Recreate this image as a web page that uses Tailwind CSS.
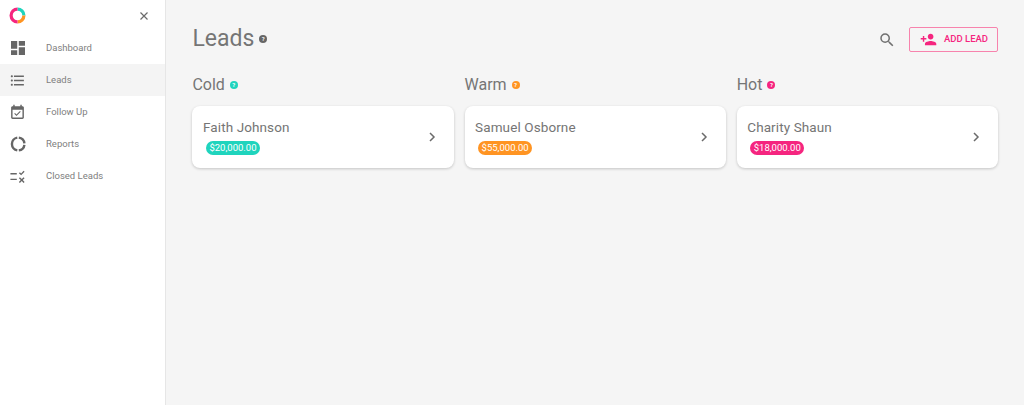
<!doctype html>
<html>
<head>
<meta charset="utf-8">
<script src="https://cdn.jsdelivr.net/npm/@tailwindcss/browser@4"></script>
</head>
<body class="bg-[#f5f5f5] font-['Roboto',sans-serif] text-[#757575]">
<div class="flex h-[405px] w-[1024px] overflow-hidden">
  <aside class="flex h-full w-[166px] shrink-0 flex-col border-r border-[#e6e6e6] bg-white">
    <div class="flex h-[32px] items-center justify-between pb-[1px] pl-[9px] pr-[16px]">
      <svg width="17" height="17" viewBox="0 0 17 17" fill="none" stroke-width="3.2">
        <path d="M8.5 2.1A6.4 6.4 0 0 1 14.9 8.5" stroke="#1fd4bd"/>
        <path d="M14.9 8.5A6.4 6.4 0 0 1 8.5 14.9" stroke="#ff9422"/>
        <path d="M8.5 14.9A6.4 6.4 0 0 1 8.5 2.1" stroke="#f5257f"/>
      </svg>
      <svg width="10" height="10" viewBox="0 0 10 10" stroke="#6b6b6b" stroke-width="1.2"><path d="M1.5 1.5l7 7M8.5 1.5l-7 7"/></svg>
    </div>
    <nav class="flex flex-col text-[9.5px] text-[#808080]">
      <a class="flex h-[32px] items-center"><span class="flex w-[46px] justify-center pr-[11px]"><svg width="14" height="14" viewBox="3 3 18 18" fill="#666"><path d="M3 13h8V3H3v10zm0 8h8v-6H3v6zm10 0h8V11h-8v10zm0-18v6h8V3h-8z"/></svg></span><span class="mt-[1px]">Dashboard</span></a>
      <a class="flex h-[32px] items-center bg-[#f4f4f4]"><span class="flex w-[46px] justify-center pr-[11px]"><svg width="17" height="17" viewBox="0 0 24 24" fill="#666"><path d="M4 10.500c-.83 0-1.500.67-1.500 1.500s.67 1.500 1.500 1.500 1.500-.67 1.500-1.500-.67-1.500-1.500-1.500zm0-6c-.83 0-1.500.67-1.500 1.500S3.170 7.500 4 7.500 5.500 6.830 5.500 6 4.830 4.500 4 4.500zm0 12c-.83 0-1.500.68-1.500 1.500s.68 1.500 1.500 1.500 1.500-.68 1.500-1.500-.67-1.500-1.500-1.500zM7 19h14v-2H7v2zm0-6h14v-2H7v2zm0-8v2h14V5H7z"/></svg></span><span class="mt-[1px]">Leads</span></a>
      <a class="flex h-[32px] items-center"><span class="flex w-[46px] justify-center pr-[11px]"><svg width="17" height="17" viewBox="0 0 24 24" fill="#666"><path d="M16.530 11.060 15.470 10l-4.880 4.880-2.120-2.120-1.060 1.060L10.590 17l5.940-5.940zM19 3h-1V1h-2v2H8V1H6v2H5c-1.110 0-2 .9-2 2v14c0 1.100.89 2 2 2h14c1.100 0 2-.9 2-2V5c0-1.100-.9-2-2-2zm0 16H5V8h14v11z"/></svg></span><span class="mt-[1px]">Follow Up</span></a>
      <a class="flex h-[32px] items-center"><span class="flex w-[46px] justify-center pr-[11px]"><svg width="16" height="16" viewBox="0 0 16 16" fill="none" stroke="#666" stroke-width="2.400"><path d="M7.300 1.600A6.500 6.500 0 0 0 7.300 14.400"/><path d="M8.800 1.600A6.500 6.500 0 0 1 14.400 7.300"/><path d="M14.400 8.800A6.500 6.500 0 0 1 8.800 14.400"/></svg></span><span class="mt-[1px]">Reports</span></a>
      <a class="flex h-[32px] items-center"><span class="flex w-[46px] justify-center pr-[11px]"><svg width="17" height="17" viewBox="0 0 24 24" fill="#666"><path d="M2 7h9v2H2zM2 15h9v2H2zM22 5.400 20.600 4l-3.500 3.600-1.700-1.700L14 7.300l3.100 3.100zM22 14.400 20.600 13 18 15.600 15.400 13 14 14.400l2.600 2.600-2.600 2.600 1.400 1.400 2.600-2.600 2.600 2.600 1.400-1.400-2.600-2.600z"/></svg></span><span class="mt-[1px]">Closed Leads</span></a>
    </nav>
  </aside>
  <main class="flex-1 pl-[26.4px] pr-[26px]">
    <header class="flex h-[76px] items-center justify-between">
      <div class="flex items-center gap-[5px]">
        <h1 class="text-[23px] leading-none">Leads</h1>
        <span class="mt-[1px] flex size-[8px] items-center justify-center rounded-full bg-[#666] text-[6px] font-bold leading-none text-white">?</span>
      </div>
      <div class="mt-[3px] flex items-center gap-[13px]">
        <svg width="18" height="18" viewBox="0 0 24 24" fill="#707070"><path d="M15.500 14h-.79l-.28-.27A6.471 6.471 0 0 0 16 9.500 6.500 6.500 0 1 0 9.500 16c1.610 0 3.090-.59 4.230-1.570l.27.28v.79l5 4.990L20.490 19l-4.990-5zm-6 0C7.010 14 5 11.990 5 9.500S7.010 5 9.500 5 14 7.010 14 9.500 11.990 14 9.500 14z"/></svg>
        <button class="flex h-[25px] w-[89px] items-center gap-[7px] rounded-[2px] border border-solid border-[#f783ad] pl-[10px] text-[9.5px] font-medium text-[#f5257f]">
          <svg width="17" height="17" viewBox="0 0 24 24" fill="#f5257f"><path d="M15 12c2.210 0 4-1.790 4-4s-1.790-4-4-4-4 1.790-4 4 1.790 4 4 4zm-9-2V7H4v3H1v2h3v3h2v-3h3v-2H6zm9 4c-2.670 0-8 1.340-8 4v2h16v-2c0-2.660-5.330-4-8-4z"/></svg>
          <span>ADD LEAD</span>
        </button>
      </div>
    </header>
    <section class="grid grid-cols-3 gap-[10.8px]">
      <div>
        <div class="flex h-[18px] items-center gap-[5px]"><h2 class="text-[16px] leading-none">Cold</h2><span class="flex size-[8px] items-center justify-center rounded-full bg-[#1fd4bd] text-[6px] font-bold leading-none text-white">?</span></div>
        <div class="mt-[12px] flex h-[62px] items-center justify-between rounded-[8px] bg-white pl-[10.6px] pr-[16px] shadow-[0_1px_3px_rgba(0,0,0,0.2)]">
          <div><div class="text-[13.500px] leading-[16px] tracking-[0.1px]">Faith Johnson</div><span class="ml-[3px] mt-[6px] flex h-[14px] w-[54px] items-center justify-center rounded-full bg-[#1fd4bd] text-[9.500px] text-white">$20,000.00</span></div>
          <svg width="12" height="12" viewBox="0 0 12 12" fill="none" stroke="#6b6b6b" stroke-width="1.500"><path d="M4 2l4 4-4 4"/></svg>
        </div>
      </div>
      <div>
        <div class="flex h-[18px] items-center gap-[5px]"><h2 class="text-[16px] leading-none">Warm</h2><span class="flex size-[8px] items-center justify-center rounded-full bg-[#ff9422] text-[6px] font-bold leading-none text-white">?</span></div>
        <div class="mt-[12px] flex h-[62px] items-center justify-between rounded-[8px] bg-white pl-[10.6px] pr-[16px] shadow-[0_1px_3px_rgba(0,0,0,0.2)]">
          <div><div class="text-[13.500px] leading-[16px] tracking-[0.1px]">Samuel Osborne</div><span class="ml-[3px] mt-[6px] flex h-[14px] w-[54px] items-center justify-center rounded-full bg-[#ff9422] text-[9.500px] text-white">$55,000.00</span></div>
          <svg width="12" height="12" viewBox="0 0 12 12" fill="none" stroke="#6b6b6b" stroke-width="1.500"><path d="M4 2l4 4-4 4"/></svg>
        </div>
      </div>
      <div>
        <div class="flex h-[18px] items-center gap-[5px]"><h2 class="text-[16px] leading-none">Hot</h2><span class="flex size-[8px] items-center justify-center rounded-full bg-[#f5257f] text-[6px] font-bold leading-none text-white">?</span></div>
        <div class="mt-[12px] flex h-[62px] items-center justify-between rounded-[8px] bg-white pl-[10.6px] pr-[16px] shadow-[0_1px_3px_rgba(0,0,0,0.2)]">
          <div><div class="text-[13.500px] leading-[16px] tracking-[0.1px]">Charity Shaun</div><span class="ml-[3px] mt-[6px] flex h-[14px] w-[54px] items-center justify-center rounded-full bg-[#f5257f] text-[9.500px] text-white">$18,000.00</span></div>
          <svg width="12" height="12" viewBox="0 0 12 12" fill="none" stroke="#6b6b6b" stroke-width="1.500"><path d="M4 2l4 4-4 4"/></svg>
        </div>
      </div>
    </section>
  </main>
</div>
</body>
</html>
